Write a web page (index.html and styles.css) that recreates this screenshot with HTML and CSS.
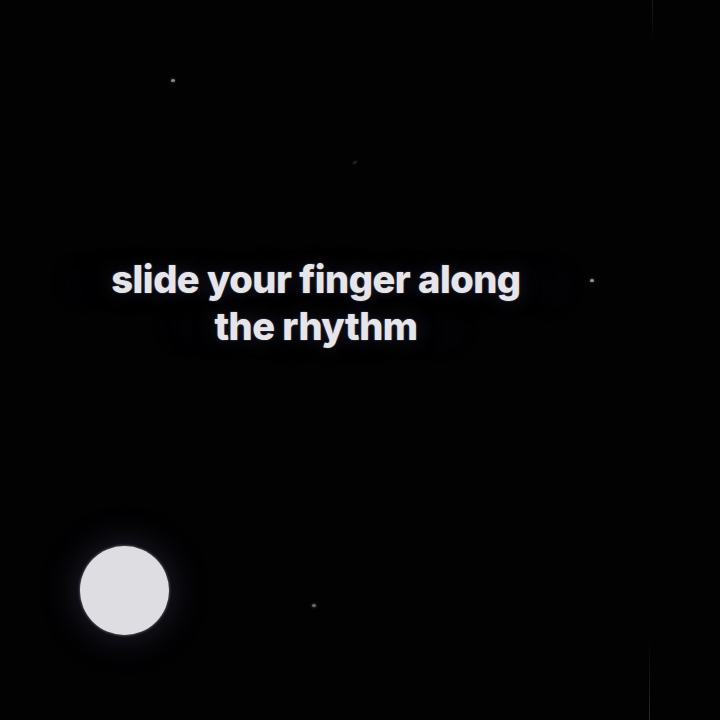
FILE: index.html
```html
<!DOCTYPE html>
<html>
<head>
<meta charset="utf-8">
<link rel="stylesheet" href="styles.css">
</head>
<body>
<div class="stage">
  <div class="caption">
    <p class="line">slide your finger along</p>
    <p class="line">the rhythm</p>
  </div>
  <span class="star s1"></span>
  <span class="star s2"></span>
  <span class="star s3"></span>
  <span class="star s4"></span>
  <span class="streak t1"></span>
  <span class="streak t2"></span>
  <div class="orb"></div>
</div>
</body>
</html>
```
FILE: styles.css
```css
html, body {
  margin: 0;
  padding: 0;
  background: #000;
}
.stage {
  position: relative;
  width: 720px;
  height: 720px;
  background: #020203;
  overflow: hidden;
}
.caption {
  padding-top: 256px;
  width: 632px;
  display: flex;
  flex-direction: column;
  align-items: center;
}
.line {
  margin: 0;
  font-family: Inter, "Open Sans", sans-serif;
  font-weight: 800;
  font-size: 38px;
  line-height: 47px;
  letter-spacing: -0.5px;
  color: #e6e6ea;
  text-shadow: 0 0 2px rgba(200, 200, 220, 0.4), 0 0 22px rgba(110, 110, 160, 0.3), 40px 0 30px rgba(60, 60, 100, 0.15), -40px 0 30px rgba(60, 60, 100, 0.15);
}
.star {
  position: absolute;
  width: 4px;
  height: 3px;
  border-radius: 50%;
  background: #8a8a8a;
  box-shadow: 0 0 3px rgba(160, 160, 160, 0.6);
}
.s1 { left: 171px; top: 79px; }
.s2 { left: 590px; top: 279px; background: #9a9a9a; }
.s3 { left: 312px; top: 604px; background: #6a6a6a; }
.s4 { left: 353px; top: 162px; width: 4px; height: 1px; background: #333; transform: rotate(-30deg); }
.streak {
  position: absolute;
  width: 1px;
  background: linear-gradient(#1a1a1a, rgba(20,20,20,0));
}
.t1 { left: 652px; top: 0; height: 45px; }
.t2 { left: 649px; top: 640px; height: 80px; background: linear-gradient(rgba(20,20,20,0), #2a2a2a); }
.orb {
  position: absolute;
  left: 80px;
  top: 546px;
  width: 89px;
  height: 89px;
  border-radius: 50%;
  background: #dedee2;
  box-shadow: 0 0 3px rgba(220,220,235,0.6), 0 0 30px 8px rgba(60, 60, 90, 0.35);
}
```
